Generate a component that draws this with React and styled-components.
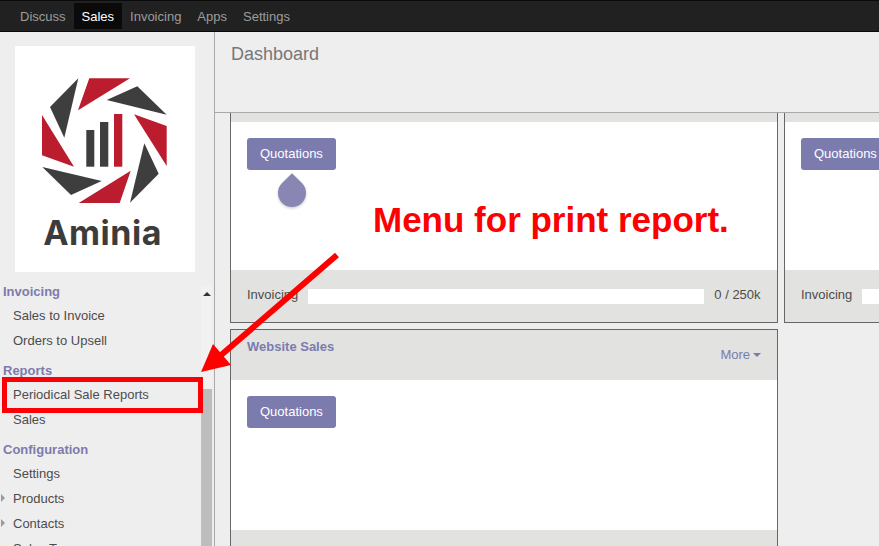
import React from "react";
import styled, { createGlobalStyle } from "styled-components";

const GlobalStyle = createGlobalStyle`
  html, body {
    margin: 0;
    height: 546px;
    overflow: hidden;
    background: #efeeef;
    font-family: "Liberation Sans", Arial, sans-serif;
    font-size: 13px;
    color: #4c4c4c;
  }
`;

const navItems = ["Discuss", "Sales", "Invoicing", "Apps", "Settings"];

const menu = [
  { title: "Invoicing", items: [{ label: "Sales to Invoice" }, { label: "Orders to Upsell" }] },
  { title: "Reports", items: [{ label: "Periodical Sale Reports" }, { label: "Sales" }] },
  {
    title: "Configuration",
    items: [
      { label: "Settings" },
      { label: "Products", sub: true },
      { label: "Contacts", sub: true },
      { label: "Sales Teams" },
    ],
  },
];

const darkShards = [
  "78.3,78.3 50,107 64.3,137.7",
  "137.3,86.3 166.7,114.7 106.7,100",
  "144.3,143.3 158.7,173.7 130,202.7",
  "42.3,167 101.7,181 71,195",
];

const redShards = [
  "89.3,78.3 130,78.3 78,110.3",
  "134,114.3 166.7,126 166.7,166",
  "130.7,170.7 119.7,203 78.7,203",
  "42,115 74,166.7 42,155.3",
];

const Page = styled.div`
  position: relative;
  width: 879px;
  height: 546px;
  overflow: hidden;
  display: flex;
  flex-direction: column;
`;

const TopBar = styled.nav`
  flex: none;
  height: 32px;
  padding: 3px 0 0 12px;
  box-sizing: border-box;
  display: flex;
  align-items: flex-start;
  background: #212121;
  border-top: 1px solid #0a0a0a;
  border-bottom: 1px solid #0a0a0a;
`;

const NavItem = styled.a`
  height: 26px;
  margin-top: -1px;
  padding: 0 8px;
  display: flex;
  align-items: center;
  color: ${(p) => (p.$active ? "#ffffff" : "#9d9d9d")};
  background: ${(p) => (p.$active ? "#0a0a0a" : "transparent")};
`;

const Body = styled.div`
  flex: 1;
  min-height: 0;
  display: flex;
`;

const Sidebar = styled.aside`
  flex: none;
  width: 214px;
  display: flex;
  flex-direction: column;
  border-right: 1px solid #a9a9a9;
`;

const LogoBox = styled.div`
  flex: none;
  width: 180px;
  height: 226px;
  margin: 14px 0 0 15px;
  display: flex;
  flex-direction: column;
  align-items: center;
  background: #ffffff;
`;

const LogoMark = styled.svg`
  flex: none;
  display: block;
  margin-top: 32px;
`;

const LogoName = styled.div`
  margin: 11px 0 0 -5px;
  font-family: Inter, "Liberation Sans", sans-serif;
  font-size: 34px;
  line-height: 36px;
  font-weight: 700;
  letter-spacing: 0.5px;
  color: #3c3c3c;
`;

const MenuArea = styled.div`
  flex: 1;
  min-height: 0;
  display: flex;
  overflow: hidden;
`;

const Menu = styled.div`
  flex: none;
  width: 201px;
  padding-top: 9px;
`;

const MenuTitle = styled.div`
  height: 22px;
  line-height: 22px;
  margin-top: ${(p) => (p.$first ? "0" : "7px")};
  padding-left: 3px;
  font-weight: 700;
  color: #7c7bad;
`;

const MenuItem = styled.div`
  position: relative;
  height: 25px;
  line-height: 25px;
  padding-left: 13px;
  white-space: nowrap;
`;

const Caret = styled.span`
  position: absolute;
  left: 1px;
  top: 8px;
  border-left: 4px solid #9a9a9a;
  border-top: 4px solid transparent;
  border-bottom: 4px solid transparent;
`;

const ScrollTrack = styled.div`
  flex: none;
  width: 11px;
  margin-top: 13px;
  display: flex;
  flex-direction: column;
  background: #f2f1f2;
`;

const ScrollUp = styled.div`
  flex: none;
  width: 0;
  height: 0;
  margin: 7px 0 0 2px;
  border-left: 4px solid transparent;
  border-right: 4px solid transparent;
  border-bottom: 4px solid #333333;
`;

const ScrollThumb = styled.div`
  flex: 1;
  margin-top: 93px;
  background: #bdbdbd;
`;

const Main = styled.main`
  flex: 1;
  min-width: 0;
  display: flex;
  flex-direction: column;
`;

const ControlPanel = styled.header`
  flex: none;
  height: 81px;
  padding: 11px 0 0 16px;
  box-sizing: border-box;
  border-bottom: 1px solid #a9a9a9;
`;

const PageTitle = styled.h1`
  margin: 0;
  font-size: 18px;
  line-height: 22px;
  font-weight: 400;
  color: #777777;
`;

const Dashboard = styled.div`
  flex: 1;
  min-height: 0;
  overflow: hidden;
  padding-left: 15px;
`;

const CardGrid = styled.div`
  display: grid;
  grid-template-columns: 548px 548px;
  gap: 6px;
`;

const Card = styled.section`
  box-sizing: border-box;
  display: flex;
  flex-direction: column;
  border: 1px solid #666666;
  border-top: ${(p) => (p.$clipped ? "none" : "1px solid #666666")};
  background: #ffffff;
`;

const CardHead = styled.div`
  height: ${(p) => (p.$clipped ? "9px" : "50px")};
  padding: ${(p) => (p.$clipped ? "0" : "9px 16px 0")};
  box-sizing: border-box;
  display: flex;
  justify-content: space-between;
  background: #e2e2e0;
`;

const CardTitle = styled.span`
  font-weight: 700;
  line-height: 15px;
  color: #7c7bad;
`;

const More = styled.span`
  height: 15px;
  margin-top: 8px;
  line-height: 15px;
  color: #7c7bad;
  display: flex;
  align-items: center;
  gap: 3px;
`;

const MoreCaret = styled.span`
  margin-top: 1px;
  border-top: 4px solid #7c7bad;
  border-left: 4px solid transparent;
  border-right: 4px solid transparent;
`;

const CardBody = styled.div`
  position: relative;
  height: ${(p) => (p.$clipped ? "148px" : "150px")};
  padding: 16px;
  box-sizing: border-box;
`;

const Button = styled.button`
  display: block;
  height: 32px;
  padding: 0 13px 2px;
  border: none;
  border-radius: 3px;
  background: #7c7bad;
  color: #ffffff;
  font: inherit;
`;

const Ripple = styled.span`
  position: absolute;
  left: 47px;
  top: 57px;
  width: 28px;
  height: 28px;
  border-radius: 50% 0 50% 50%;
  transform: rotate(-45deg);
  background: #8a86b4;
  box-shadow: -1px 1px 3px rgba(0, 0, 0, 0.2);
`;

const CardFoot = styled.div`
  height: 52px;
  padding: 0 16px;
  box-sizing: border-box;
  display: flex;
  align-items: center;
  gap: 10px;
  background: #e2e2e0;
`;

const FootLabel = styled.span`
  margin-bottom: 4px;
  white-space: nowrap;
`;

const Progress = styled.div`
  flex: none;
  width: 396px;
  height: 15px;
  background: #ffffff;
`;

const Arrow = styled.svg`
  position: absolute;
  left: 0;
  top: 0;
  pointer-events: none;
`;

const Highlight = styled.div`
  position: absolute;
  left: 2px;
  top: 377px;
  width: 191px;
  height: 26px;
  border: 5px solid #fb0007;
`;

const Caption = styled.div`
  position: absolute;
  left: 373px;
  top: 199px;
  font-size: 35px;
  line-height: 42px;
  font-weight: 700;
  white-space: nowrap;
  color: #ff0000;
`;

const DashCard = ({ title, clipped, ripple, progress }) => (
  <Card $clipped={clipped}>
    <CardHead $clipped={clipped}>
      {title && <CardTitle>{title}</CardTitle>}
      {title && (
        <More>
          More <MoreCaret />
        </More>
      )}
    </CardHead>
    <CardBody $clipped={clipped}>
      <Button>Quotations</Button>
      {ripple && <Ripple />}
    </CardBody>
    <CardFoot>
      <FootLabel>Invoicing</FootLabel>
      {progress && <Progress />}
      {progress && <FootLabel>0 / 250k</FootLabel>}
    </CardFoot>
  </Card>
);

const App = () => (
  <Page>
    <GlobalStyle />
    <TopBar>
      {navItems.map((item) => (
        <NavItem key={item} $active={item === "Sales"}>
          {item}
        </NavItem>
      ))}
    </TopBar>
    <Body>
      <Sidebar>
        <LogoBox>
          <LogoMark width="126" height="126" viewBox="42 78 126 126">
            {darkShards.map((points) => (
              <polygon key={points} points={points} fill="#3e3e3e" />
            ))}
            {redShards.map((points) => (
              <polygon key={points} points={points} fill="#bb1c2e" />
            ))}
            <rect x="86.3" y="130" width="8" height="36.7" fill="#3e3e3e" />
            <rect x="100" y="122" width="8.3" height="44.7" fill="#3e3e3e" />
            <rect x="114" y="114" width="8.3" height="52.7" fill="#bb1c2e" />
          </LogoMark>
          <LogoName>Aminia</LogoName>
        </LogoBox>
        <MenuArea>
          <Menu>
            {menu.map((group, i) => (
              <div key={group.title}>
                <MenuTitle $first={i === 0}>{group.title}</MenuTitle>
                {group.items.map((item) => (
                  <MenuItem key={item.label}>
                    {item.sub && <Caret />}
                    {item.label}
                  </MenuItem>
                ))}
              </div>
            ))}
          </Menu>
          <ScrollTrack>
            <ScrollUp />
            <ScrollThumb />
          </ScrollTrack>
        </MenuArea>
      </Sidebar>
      <Main>
        <ControlPanel>
          <PageTitle>Dashboard</PageTitle>
        </ControlPanel>
        <Dashboard>
          <CardGrid>
            <DashCard clipped ripple progress />
            <DashCard clipped progress />
            <DashCard title="Website Sales" />
          </CardGrid>
        </Dashboard>
      </Main>
    </Body>
    <Arrow width="879" height="546" viewBox="0 0 879 546">
      <line x1="337" y1="255" x2="220" y2="356" stroke="#ff0000" strokeWidth="6" />
      <polygon points="201,372 213,344 231,365" fill="#ff0000" />
    </Arrow>
    <Highlight />
    <Caption>Menu for print report.</Caption>
  </Page>
);

export default App;
